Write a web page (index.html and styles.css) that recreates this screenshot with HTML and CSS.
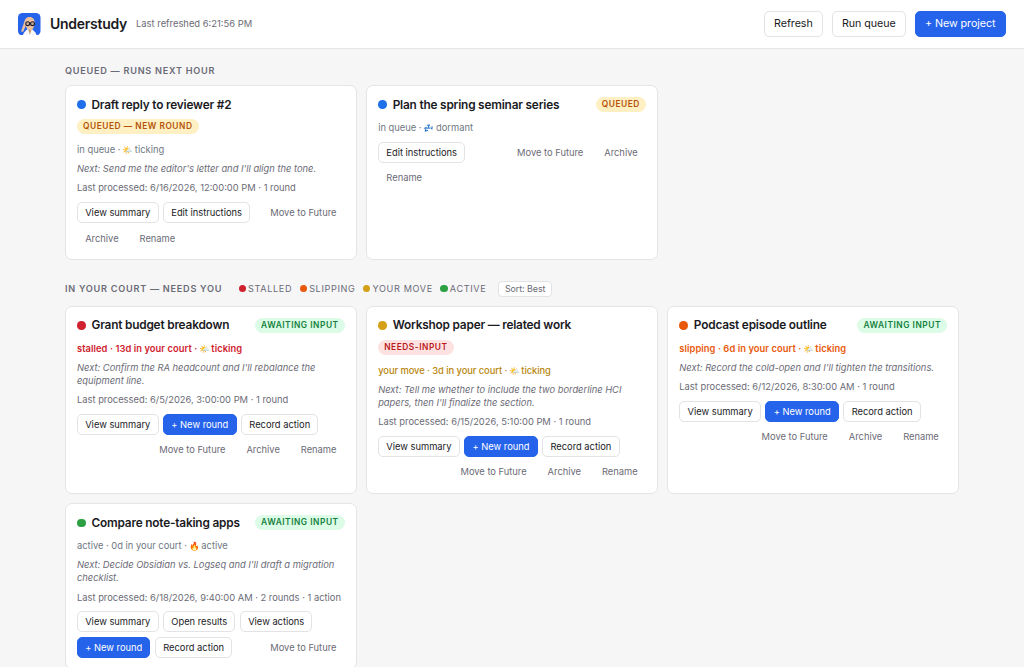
FILE: index.html
```
<!DOCTYPE html>
<html lang="en">
<head>
    <meta charset="UTF-8">
    <meta name="viewport" content="width=device-width, initial-scale=1.0">
    <title>Understudy</title>
    <link rel="stylesheet" href="styles.css">
</head>
<body>
    <header class="topbar">
        <svg class="logo" viewBox="0 0 22 22">
            <rect width="22" height="22" rx="4.5" fill="#2563eb"/>
            <path d="M4.500 22l1.500-3 3-3h5l3 3 1.500 3z" fill="#f5f7fb"/>
            <path d="M11.200 3.800c3.400 0 5 2.300 5 5.400 0 4.200-1.600 7.400-4.500 7.400-2.200 0-3.500-1.800-4.100-4.100L5 18.400l-2-.4 3-9C6.700 5.500 8.500 3.800 11.200 3.800z" fill="#efc09c"/>
            <path d="M10 16.300h3.200L11.600 21z" fill="#c99a62"/>
            <g fill="#d3ab94" stroke="#1c2030" stroke-width="1.100">
                <circle cx="9.500" cy="10.400" r="1.900"/>
                <circle cx="14.200" cy="10.400" r="1.900"/>
            </g>
        </svg>
        <h1>Understudy</h1>
        <span class="refreshed">Last refreshed 6:21:56 PM</span>
        <div class="topbar-actions">
            <button class="btn">Refresh</button>
            <button class="btn">Run queue</button>
            <button class="btn primary">+ New project</button>
        </div>
    </header>

    <main>
        <section>
            <div class="section-head"><h2>Queued — runs next hour</h2></div>
            <div class="grid">
                <article class="card">
                    <div class="card-head">
                        <h3><span class="dot blue"></span>Draft reply to reviewer #2</h3>
                        <span class="badge queued">Queued — new round</span>
                    </div>
                    <div class="meta">in queue · <span class="emoji">🌤️</span> ticking</div>
                    <div class="next">Next: Send me the editor's letter and I'll align the tone.</div>
                    <div class="last">Last processed: 6/16/2026, 12:00:00 PM · 1 round</div>
                    <div class="actions">
                        <button class="btn small">View summary</button>
                        <button class="btn small">Edit instructions</button>
                        <button class="btn small ghost push">Move to Future</button>
                        <button class="btn small ghost">Archive</button>
                        <button class="btn small ghost">Rename</button>
                    </div>
                </article>
                <article class="card">
                    <div class="card-head">
                        <h3><span class="dot blue"></span>Plan the spring seminar series</h3>
                        <span class="badge queued">Queued</span>
                    </div>
                    <div class="meta">in queue · <span class="emoji">💤</span> dormant</div>
                    <div class="actions">
                        <button class="btn small">Edit instructions</button>
                        <button class="btn small ghost push">Move to Future</button>
                        <button class="btn small ghost">Archive</button>
                        <button class="btn small ghost">Rename</button>
                    </div>
                </article>
            </div>
        </section>

        <section>
            <div class="section-head">
                <h2>In your court — needs you</h2>
                <div class="legend">
                    <span><i class="dot red"></i>Stalled</span>
                    <span><i class="dot orange"></i>Slipping</span>
                    <span><i class="dot yellow"></i>Your move</span>
                    <span><i class="dot green"></i>Active</span>
                </div>
                <button class="btn sort">Sort: Best</button>
            </div>
            <div class="grid">
                <article class="card">
                    <div class="card-head">
                        <h3><span class="dot red"></span>Grant budget breakdown</h3>
                        <span class="badge awaiting">Awaiting input</span>
                    </div>
                    <div class="meta stalled">stalled · 13d in your court · <span class="emoji">🌤️</span> ticking</div>
                    <div class="next">Next: Confirm the RA headcount and I'll rebalance the equipment line.</div>
                    <div class="last">Last processed: 6/5/2026, 3:00:00 PM · 1 round</div>
                    <div class="actions">
                        <button class="btn small">View summary</button>
                        <button class="btn small primary">+ New round</button>
                        <button class="btn small">Record action</button>
                        <button class="btn small ghost push">Move to Future</button>
                        <button class="btn small ghost">Archive</button>
                        <button class="btn small ghost">Rename</button>
                    </div>
                </article>
                <article class="card">
                    <div class="card-head">
                        <h3><span class="dot yellow"></span>Workshop paper — related work</h3>
                        <span class="badge needs">Needs-input</span>
                    </div>
                    <div class="meta your-move">your move · 3d in your court · <span class="emoji">🌤️</span> ticking</div>
                    <div class="next">Next: Tell me whether to include the two borderline HCI papers, then I'll finalize the section.</div>
                    <div class="last">Last processed: 6/15/2026, 5:10:00 PM · 1 round</div>
                    <div class="actions">
                        <button class="btn small">View summary</button>
                        <button class="btn small primary">+ New round</button>
                        <button class="btn small">Record action</button>
                        <button class="btn small ghost push">Move to Future</button>
                        <button class="btn small ghost">Archive</button>
                        <button class="btn small ghost">Rename</button>
                    </div>
                </article>
                <article class="card">
                    <div class="card-head">
                        <h3><span class="dot orange"></span>Podcast episode outline</h3>
                        <span class="badge awaiting">Awaiting input</span>
                    </div>
                    <div class="meta slipping">slipping · 6d in your court · <span class="emoji">🌤️</span> ticking</div>
                    <div class="next">Next: Record the cold-open and I'll tighten the transitions.</div>
                    <div class="last">Last processed: 6/12/2026, 8:30:00 AM · 1 round</div>
                    <div class="actions">
                        <button class="btn small">View summary</button>
                        <button class="btn small primary">+ New round</button>
                        <button class="btn small">Record action</button>
                        <button class="btn small ghost push">Move to Future</button>
                        <button class="btn small ghost">Archive</button>
                        <button class="btn small ghost">Rename</button>
                    </div>
                </article>
                <article class="card">
                    <div class="card-head">
                        <h3><span class="dot green"></span>Compare note-taking apps</h3>
                        <span class="badge awaiting">Awaiting input</span>
                    </div>
                    <div class="meta">active · 0d in your court · <span class="emoji">🔥</span> active</div>
                    <div class="next">Next: Decide Obsidian vs. Logseq and I'll draft a migration checklist.</div>
                    <div class="last">Last processed: 6/18/2026, 9:40:00 AM · 2 rounds · 1 action</div>
                    <div class="actions">
                        <button class="btn small">View summary</button>
                        <button class="btn small">Open results</button>
                        <button class="btn small">View actions</button>
                        <button class="btn small primary">+ New round</button>
                        <button class="btn small">Record action</button>
                        <button class="btn small ghost push">Move to Future</button>
                    </div>
                </article>
            </div>
        </section>
    </main>
</body>
</html>
```
FILE: styles.css
```
* {
    box-sizing: border-box;
}
html {
    overflow: hidden;
}
body {
    margin: 0;
    height: 667px;
    overflow: hidden;
    background: #f6f6f7;
    color: #1a1a1e;
    font-family: Inter, "Liberation Sans", sans-serif;
    font-size: 9.35px;
}
h1, h2, h3 {
    margin: 0;
    font-weight: 600;
}

/* Top bar */
.topbar {
    display: flex;
    align-items: center;
    height: 48.5px;
    padding: 0 18.5px 0 18px;
    background: #fff;
    border-bottom: 1px solid #e5e5e8;
}
.logo {
    width: 22.5px;
    height: 22.5px;
    margin-right: 9.5px;
}
h1 {
    font-size: 14px;
    letter-spacing: -0.27px;
}
.refreshed {
    margin-left: 9px;
    font-size: 9.4px;
    color: #6b6b76;
}
.topbar-actions {
    display: flex;
    gap: 9.3px;
    margin-left: auto;
}

/* Buttons */
.btn {
    height: 26px;
    padding: 0 9px;
    border: 1px solid #e3e3e7;
    border-radius: 5px;
    background: #fff;
    color: #1a1a1e;
    font-family: inherit;
    font-size: 10.7px;
    letter-spacing: -0.05px;
    white-space: nowrap;
}
.btn.small {
    height: 21px;
    padding: 0 7.2px;
    font-size: 9.35px;
    letter-spacing: -0.01px;
}
.btn.primary {
    background: #2563eb;
    border-color: #2563eb;
    color: #fff;
}
.btn.ghost {
    background: transparent;
    border-color: transparent;
    color: #6b6b76;
}
.btn.sort {
    height: 16.5px;
    margin-left: 12px;
    padding: 0 5.5px;
    font-size: 8.9px;
    color: #6b6b76;
    border-radius: 4px;
}

/* Sections */
main {
    width: 894px;
    margin: 0 auto;
    padding-top: 12.7px;
}
.section-head {
    display: flex;
    align-items: center;
    height: 18px;
    margin-bottom: 6px;
    color: #6b6b76;
    text-transform: uppercase;
}
section + section {
    margin-top: 19.9px;
}
section + section .section-head {
    margin-bottom: 8px;
}
.section-head .btn {
    text-transform: none;
}
h2 {
    font-size: 9.15px;
    letter-spacing: 0.74px;
}
.legend {
    display: flex;
    gap: 7.6px;
    margin-left: 16.5px;
    font-size: 9.1px;
    letter-spacing: 0.65px;
}
.legend span {
    display: flex;
    align-items: center;
}
.legend .dot {
    width: 7.2px;
    height: 7.2px;
    margin-right: 2.2px;
}
.grid {
    display: grid;
    grid-template-columns: repeat(3, 1fr);
    gap: 9.5px;
}

/* Cards */
.card {
    padding: 11px 11px 10.4px;
    background: #fff;
    border: 1px solid #e5e5e8;
    border-radius: 7px;
}
.card-head {
    display: flex;
    flex-wrap: wrap;
    justify-content: space-between;
    gap: 7px;
    margin-bottom: 8.7px;
}
h3 {
    display: flex;
    align-items: center;
    height: 15px;
    font-size: 11.85px;
    letter-spacing: -0.2px;
    white-space: nowrap;
}
.dot {
    width: 8.5px;
    height: 8.5px;
    border-radius: 50%;
}
h3 .dot {
    margin-right: 6px;
}
.blue { background: #1f6feb; }
.red { background: #cf222e; }
.orange { background: #e8590c; }
.yellow { background: #d4a017; }
.green { background: #2da044; }

.badge {
    height: 15px;
    padding: 0 6px;
    border-radius: 8px;
    font-size: 8.4px;
    font-weight: 600;
    line-height: 15px;
    letter-spacing: 0.52px;
    text-transform: uppercase;
}
.badge.queued { background: #fef0c3; color: #b45309; }
.badge.awaiting { background: #dcfce7; color: #15803d; }
.badge.needs { background: #fee2e2; color: #b91c1c; }

.meta, .next, .last {
    line-height: 13.2px;
    color: #6b6b76;
}
.meta {
    height: 13.2px;
    color: #6e7781;
}
.stalled, .slipping {
    font-weight: 600;
    letter-spacing: 0.06px;
}
.stalled { color: #cf222e; }
.slipping { color: #e8590c; }
.your-move { color: #b8860b; font-weight: 500; letter-spacing: -0.06px; }
.emoji {
    font-size: 8.6px;
    letter-spacing: -1.6px;
    margin-left: -0.8px;
    margin-right: 0.6px;
}
.next, .last {
    margin-top: 6px;
}
.next {
    font-style: italic;
    letter-spacing: -0.01px;
}
.actions {
    display: flex;
    flex-wrap: wrap;
    gap: 4.6px;
    margin-top: 7.5px;
}
.push {
    margin-left: auto;
}
```
